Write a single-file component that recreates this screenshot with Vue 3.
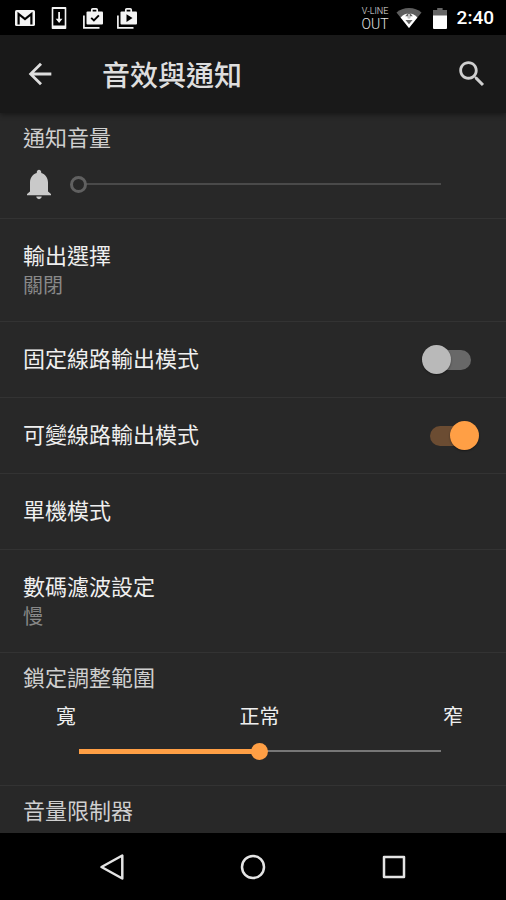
<script setup>
import { ref } from 'vue'

const notificationVolume = ref(0)
const fixedLineOut = ref(false)
const variableLineOut = ref(true)
const lockRange = ref(1)
</script>

<template>
  <div class="screen">
    <div class="status">
      <div class="status-group">
        <svg class="status-icon" viewBox="0 0 24 24" aria-hidden="true">
          <rect x="2" y="4" width="20" height="16" rx="1.6" fill="#f4f4f4" />
          <path d="M5.6 18.6V8L12 13l6.4-5v10.600" fill="none" stroke="#000" stroke-width="2.200" />
        </svg>
        <svg class="status-icon" viewBox="0 0 24 24" aria-hidden="true">
          <path fill="#f4f4f4" fill-rule="evenodd" d="M5.500 1h13a.8.8 0 0 1 .8.800v20.400a.8.8 0 0 1-.8.800h-13a.8.8 0 0 1-.8-.800V1.800a.8.8 0 0 1 .8-.800zM6.300 3v16.500h11.400V3z" />
          <path fill="#f4f4f4" d="M11.200 6h1.800v6.800h2.500L12.100 17l-3.400-4.200h2.500z" />
        </svg>
        <svg class="status-icon" viewBox="0 0 24 24" aria-hidden="true">
          <path fill="none" stroke="#f4f4f4" stroke-width="1.700" d="M2.900 9.500v12.300h15.600" />
          <path fill="none" stroke="#f4f4f4" stroke-width="1.700" d="M10.800 6V3.800q0-1 1-1h3.400q1 0 1 1V6" />
          <rect x="5.500" y="5.500" width="16.500" height="13" rx="1" fill="#f4f4f4" />
          <path d="M10.200 11.800l2.700 2.700 5-5.200" fill="none" stroke="#000" stroke-width="1.900" />
        </svg>
        <svg class="status-icon" viewBox="0 0 24 24" aria-hidden="true">
          <path fill="none" stroke="#f4f4f4" stroke-width="1.700" d="M2.900 9.500v12.300h15.600" />
          <path fill="none" stroke="#f4f4f4" stroke-width="1.700" d="M10.800 6V3.800q0-1 1-1h3.400q1 0 1 1V6" />
          <rect x="5.500" y="5.500" width="16.500" height="13" rx="1" fill="#f4f4f4" />
          <path d="M11.500 8.200l6 3.900-6 3.900z" fill="#000" />
        </svg>
      </div>
      <div class="status-group status-right">
        <div class="line-out"><span class="line-top">V-LINE</span><span class="line-bottom">OUT</span></div>
        <svg class="wifi" viewBox="0 0 26 22" aria-hidden="true">
          <path fill="#5e5e5e" d="M13 21L.5 5.500Q5.500 1 13 1t12.500 4.500z" />
          <path fill="#fff" d="M13 21L4.600 10.500Q8 6.500 13 6.500t8.400 4z" />
          <path fill="#666" d="M13 4.800l3.800 4.400h-2.600v2h-2.400v-2H9.200zM9.400 13h7.200L13 17.200z" />
          <path fill="#fff" d="M12.400 7h1.200v4h-1.200z" />
        </svg>
        <svg class="battery" viewBox="0 0 14 22" aria-hidden="true">
          <path fill="#666" d="M4.200 1h5.400v2H14v6H0V3h4.200z" />
          <path fill="#fff" d="M0 8.500h14V21a1 1 0 0 1-1 1H1a1 1 0 0 1-1-1z" />
        </svg>
        <time class="clock">2:40</time>
      </div>
    </div>

    <header class="app-bar">
      <button class="icon-button" type="button" aria-label="返回">
        <svg class="bar-icon" viewBox="0 0 24 24"><path fill="#dedede" d="M20 11H7.830l5.590-5.590L12 4l-8 8 8 8 1.410-1.410L7.830 13H20z" /></svg>
      </button>
      <h1 class="heading">音效與通知</h1>
      <button class="icon-button" type="button" aria-label="搜尋">
        <svg class="bar-icon" viewBox="0 0 24 24"><path fill="#cfcfcf" d="M15.500 14h-.790l-.280-.270C15.410 12.590 16 11.110 16 9.500 16 5.910 13.090 3 9.500 3S3 5.910 3 9.500 5.910 16 9.500 16c1.610 0 3.090-.590 4.230-1.570l.270.280v.790l5 4.990L20.490 19zM9.500 14C7.010 14 5 11.990 5 9.500S7.010 5 9.500 5 14 7.010 14 9.500 11.990 14 9.500 14z" /></svg>
      </button>
    </header>

    <main class="list">
      <section class="slider-row volume-row">
        <label class="label muted" for="volume">通知音量</label>
        <div class="slider-line">
          <svg class="bell" viewBox="0 0 24 24" aria-hidden="true"><path fill="#c9c9c9" d="M10.200 20.400h3.600c0 1-.8 1.700-1.800 1.700s-1.800-.7-1.800-1.700zM18 17v-6c0-3.200-1.800-5.600-4.500-6.400V4.200c0-.9-.7-1.700-1.500-1.700s-1.500.8-1.500 1.700v.4C7.800 5.400 6 7.800 6 11v6l-2 1.700v.8h16v-.8z" /></svg>
          <input id="volume" v-model.number="notificationVolume" class="range empty" type="range" min="0" max="7" />
        </div>
      </section>

      <button class="row two-line" type="button">
        <span class="label">輸出選擇</span>
        <span class="summary">關閉</span>
      </button>

      <label class="row switch-row">
        <span class="label">固定線路輸出模式</span>
        <input v-model="fixedLineOut" class="switch" type="checkbox" role="switch" />
      </label>

      <label class="row switch-row">
        <span class="label">可變線路輸出模式</span>
        <input v-model="variableLineOut" class="switch" type="checkbox" role="switch" />
      </label>

      <button class="row" type="button">
        <span class="label">單機模式</span>
      </button>

      <button class="row two-line" type="button">
        <span class="label">數碼濾波設定</span>
        <span class="summary">慢</span>
      </button>

      <section class="slider-row lock-row">
        <label class="label muted" for="lock">鎖定調整範圍</label>
        <div class="ticks"><span>寬</span><span>正常</span><span>窄</span></div>
        <div class="slider-line">
          <input id="lock" v-model.number="lockRange" class="range" type="range" min="0" max="2" :style="{ '--fill': lockRange / 2 }" />
        </div>
      </section>

      <section class="slider-row">
        <span class="label muted">音量限制器</span>
      </section>
    </main>

    <nav class="nav">
      <button class="nav-button" type="button" aria-label="上一頁">
        <svg class="nav-icon" viewBox="0 0 28 28"><path d="M24.300 2.500v23L3.500 14z" /></svg>
      </button>
      <button class="nav-button" type="button" aria-label="主畫面">
        <svg class="nav-icon" viewBox="0 0 28 28"><circle cx="14" cy="14" r="11" /></svg>
      </button>
      <button class="nav-button" type="button" aria-label="最近使用">
        <svg class="nav-icon" viewBox="0 0 28 28"><rect x="4" y="4" width="20" height="20" /></svg>
      </button>
    </nav>
  </div>
</template>

<style>
body {
  margin: 0;
  background: #000;
}
</style>

<style scoped>
.screen {
  display: flex;
  flex-direction: column;
  height: 100vh;
  overflow: hidden;
  background: #282828;
  color: #efefef;
  font-family: Roboto, "Noto Sans CJK TC", sans-serif;
}
.screen *,
.screen *::before {
  box-sizing: border-box;
}
svg {
  display: block;
  flex: none;
}
button {
  margin: 0;
  padding: 0;
  border: 0;
  background: none;
  color: inherit;
  font: inherit;
  text-align: left;
  cursor: pointer;
}
.status {
  display: flex;
  flex: none;
  justify-content: space-between;
  align-items: center;
  height: 35px;
  padding: 0 12px 0 13px;
  background: #000;
}
.status-group {
  display: flex;
  align-items: center;
  gap: 10px;
}
.status-right {
  gap: 7px;
}
.status-icon {
  width: 24px;
  height: 24px;
}
.line-out {
  display: flex;
  flex-direction: column;
  align-items: center;
  color: #e4e4e4;
  font-weight: 300;
}
.line-top {
  font-size: 9px;
  line-height: 12px;
}
.line-bottom {
  font-size: 14px;
  line-height: 14px;
}
.wifi {
  width: 26px;
  height: 22px;
}
.battery {
  width: 14px;
  height: 22px;
  margin: 0 3px 0 4px;
}
.clock {
  color: #fff;
  font-size: 19px;
  font-weight: 500;
  line-height: 24px;
}
.app-bar {
  position: relative;
  display: flex;
  flex: none;
  align-items: center;
  height: 78px;
  padding: 0 17px 0 23px;
  background: #191919;
  box-shadow: 0 2px 5px rgba(0, 0, 0, 0.4);
}
.bar-icon {
  width: 34px;
  height: 34px;
}
.heading {
  flex: 1;
  margin: 0 0 0 45px;
  padding-top: 6px;
  color: #dedede;
  font-size: 28px;
  font-weight: 500;
  line-height: 40px;
}
.list {
  flex: 1;
  min-height: 0;
  overflow: hidden;
}
.row {
  display: flex;
  flex-direction: column;
  justify-content: center;
  width: 100%;
  min-height: 76px;
  padding: 22px 27px 22px 23px;
  border-bottom: 1px solid #333;
}
.two-line {
  padding-top: 23px;
  padding-bottom: 21px;
}
.switch-row {
  flex-direction: row;
  justify-content: space-between;
  align-items: center;
  cursor: pointer;
}
.label {
  display: block;
  font-size: 22px;
  line-height: 30px;
}
.muted {
  color: #cfcfcf;
}
.summary {
  color: #888;
  font-size: 20px;
  line-height: 28px;
}
.slider-row {
  padding: 11px 23px 16px;
  border-bottom: 1px solid #333;
}
.slider-line {
  display: flex;
  align-items: center;
  height: 36px;
  padding: 0 34px 0 47px;
}
.volume-row .slider-line {
  gap: 13px;
  margin-top: 12px;
  padding-left: 0;
}
.bell {
  width: 36px;
  height: 36px;
  margin-left: -2px;
}
.ticks {
  display: flex;
  justify-content: space-between;
  margin-top: 7px;
  padding: 0 20px 0 33px;
  font-size: 20px;
  line-height: 32px;
}
.range {
  --fill: 0;
  flex: 1;
  min-width: 0;
  height: 17px;
  margin: 0;
  appearance: none;
  background:
    linear-gradient(#ff9f45, #ff9f45) 9px center / calc((100% - 17px) * var(--fill)) 5px no-repeat,
    linear-gradient(#777, #777) center / calc(100% - 17px) 2px no-repeat;
}
.range::-webkit-slider-thumb {
  width: 17px;
  height: 17px;
  border-radius: 50%;
  appearance: none;
  background: #ff9f45;
}
.range.empty {
  background: linear-gradient(#4a4a4a, #4a4a4a) center / calc(100% - 17px) 2px no-repeat;
}
.range.empty::-webkit-slider-thumb {
  box-sizing: border-box;
  border: 3px solid #606060;
  background: #282828;
}
.switch {
  position: relative;
  display: flex;
  flex: none;
  align-items: center;
  width: 57px;
  height: 29px;
  margin: 0;
  appearance: none;
  cursor: pointer;
}
.switch::before {
  content: "";
  width: 41px;
  height: 20px;
  margin: 0 8px;
  border-radius: 10px;
  background: #686868;
}
.switch::after {
  content: "";
  position: absolute;
  left: 0;
  width: 29px;
  height: 29px;
  border-radius: 50%;
  background: #b9b9b9;
  box-shadow: 0 1px 2px rgba(0, 0, 0, 0.4);
}
.switch:checked::before {
  background: #6b4c32;
}
.switch:checked::after {
  left: 28px;
  background: #ff9f45;
}
.nav {
  display: flex;
  flex: none;
  align-items: center;
  height: 67px;
  padding: 0 42px;
  background: #000;
}
.nav-button {
  display: flex;
  flex: 1;
  justify-content: center;
  align-items: center;
  height: 100%;
}
.nav-icon {
  width: 28px;
  height: 28px;
  fill: none;
  stroke: #e4e4e4;
  stroke-width: 2.5;
  stroke-linejoin: round;
}
</style>
